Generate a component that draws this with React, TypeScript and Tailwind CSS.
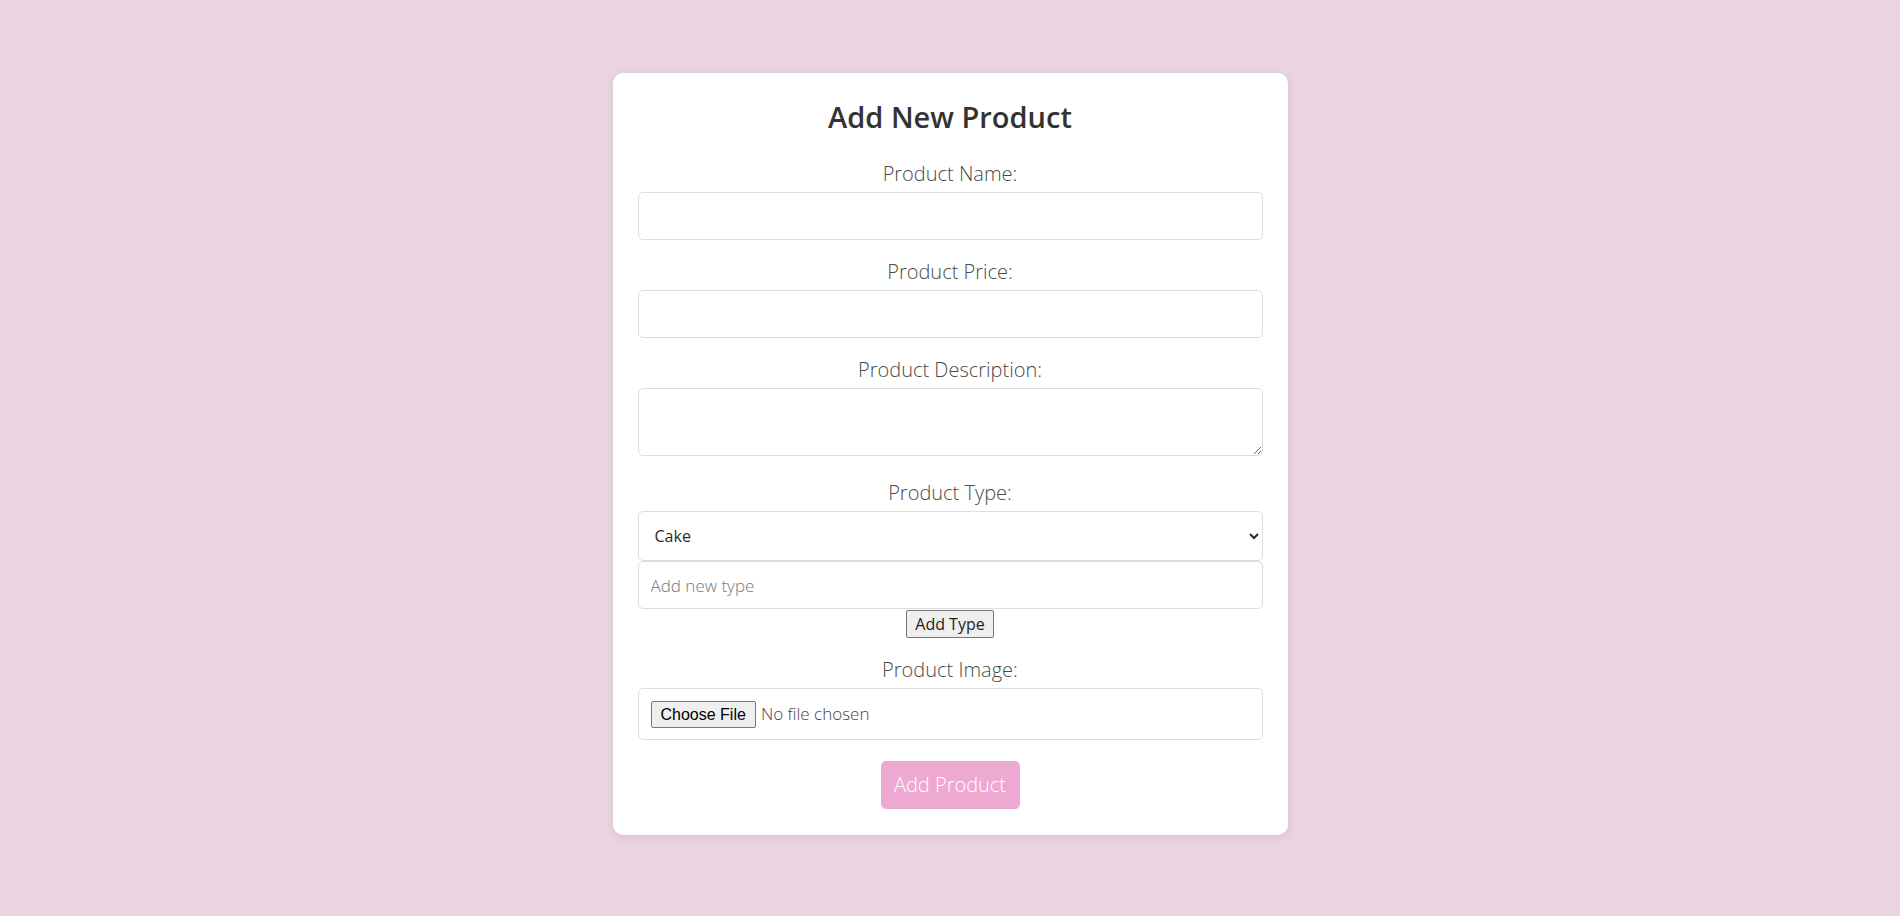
import React, { useState } from "react";

const font = { fontFamily: "'Open Sans', Lato, sans-serif" };

const Label = ({ children, htmlFor }: { children: React.ReactNode; htmlFor: string }) => (
  <label
    htmlFor={htmlFor}
    className="block text-center text-[20px] leading-[24px] font-light text-[#4a4a4a] mb-[6px]"
  >
    {children}
  </label>
);

const App = () => {
  const [types, setTypes] = useState<string[]>(["Cake", "Cookie", "Bread"]);
  const [newType, setNewType] = useState("");

  const addType = () => {
    if (newType.trim() === "") return;
    setTypes([...types, newType.trim()]);
    setNewType("");
  };

  return (
    <div className="min-h-screen w-full bg-[#ead4e1] pt-[73px] pb-[80px]" style={font}>
      <form
        className="mx-auto w-[675px] rounded-[10px] bg-white px-[25px] pt-[26px] pb-[26px] shadow-[0_2px_8px_rgba(0,0,0,0.1)]"
        onSubmit={(e) => e.preventDefault()}
      >
        <h2 className="text-center text-[29px] leading-[36px] font-semibold text-[#333] mb-[27px]">
          Add New Product
        </h2>

        <Label htmlFor="name">Product Name:</Label>
        <input
          id="name"
          type="text"
          className="block w-full h-[48px] rounded-[5px] border border-[#ddd] px-[12px] text-[17px] mb-[20px] outline-none"
        />

        <Label htmlFor="price">Product Price:</Label>
        <input
          id="price"
          type="number"
          className="block w-full h-[48px] rounded-[5px] border border-[#ddd] px-[12px] text-[17px] mb-[20px] outline-none"
        />

        <Label htmlFor="desc">Product Description:</Label>
        <textarea
          id="desc"
          className="block w-full h-[68px] rounded-[5px] border border-[#ddd] px-[12px] py-[8px] text-[17px] mb-[25px] outline-none"
        />

        <Label htmlFor="type">Product Type:</Label>
        <select
          id="type"
          className="block w-full h-[50px] rounded-[5px] border border-[#ddd] bg-white px-[12px] text-[16px] text-[#2a2a2a] outline-none"
          style={font}
        >
          {types.map((t) => (
            <option key={t} value={t}>
              {t}
            </option>
          ))}
        </select>
        <input
          type="text"
          placeholder="Add new type"
          value={newType}
          onChange={(e) => setNewType(e.target.value)}
          className="block w-full h-[48px] rounded-[5px] border border-[#ddd] px-[12px] text-[17px] font-light placeholder:text-[#777] outline-none"
        />
        <div className="flex justify-center mt-[1px] mb-[20px]">
          <button
            type="button"
            onClick={addType}
            className="h-[28px] rounded-[2px] border border-[#767676] bg-[#efefef] px-[8px] text-[16px] leading-[20px] text-[#222]"
          >
            Add Type
          </button>
        </div>

        <Label htmlFor="image">Product Image:</Label>
        <div className="flex h-[52px] w-full items-center rounded-[5px] border border-[#ddd] px-[12px] mb-[21px]">
          <span
            className="h-[27px] rounded-[2px] border border-[#767676] bg-[#efefef] px-[9px] text-[16px] leading-[25px] text-black"
            style={{ fontFamily: "'Liberation Sans', Arial, sans-serif" }}
          >
            Choose File
          </span>
          <span className="ml-[5px] text-[17px] font-light text-[#444]">No file chosen</span>
        </div>

        <div className="flex justify-center">
          <button
            type="submit"
            className="h-[48px] w-[139px] rounded-[5px] bg-[#eda9d2] text-[20px] font-light text-white"
          >
            Add Product
          </button>
        </div>
      </form>
    </div>
  );
};

export default App;
